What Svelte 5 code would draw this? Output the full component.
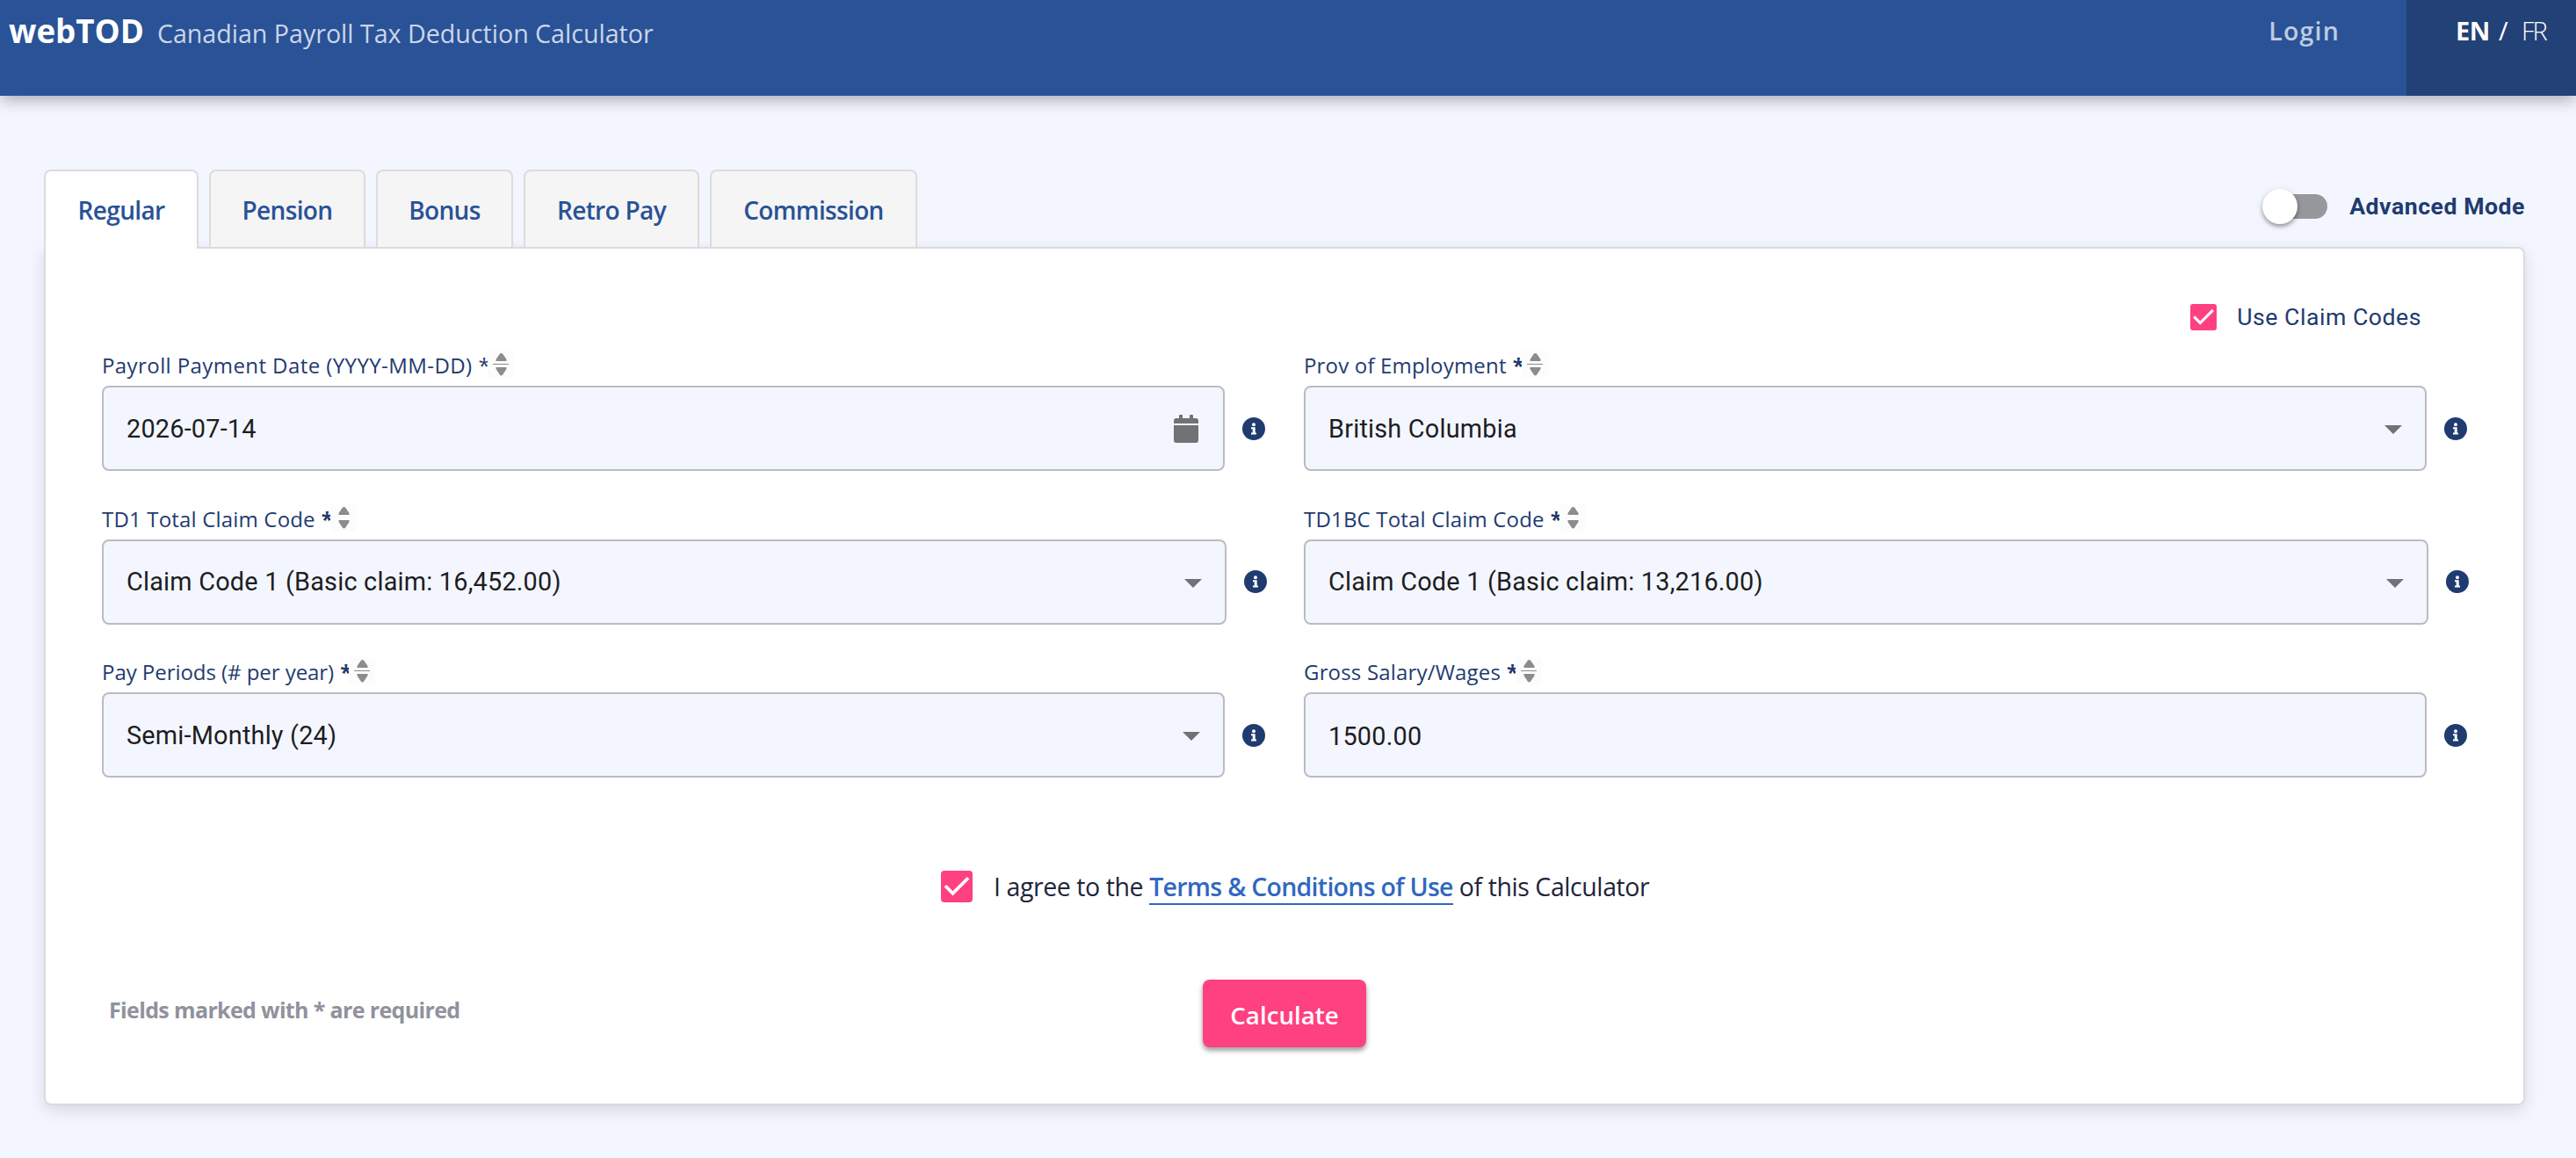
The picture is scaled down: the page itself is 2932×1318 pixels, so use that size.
<script>
  const tabs = ['Regular', 'Pension', 'Bonus', 'Retro Pay', 'Commission'];
  let activeTab = $state('Regular');
  let advanced = $state(false);
  let useClaimCodes = $state(true);
  let agreed = $state(true);

  const fields = [
    { id: 'date', label: 'Payroll Payment Date (YYYY-MM-DD)', value: '2026-07-14', icon: 'calendar', light: true, line: true },
    { id: 'prov', label: 'Prov of Employment', value: 'British Columbia', icon: 'arrow', line: true },
    { id: 'td1', label: 'TD1 Total Claim Code', value: 'Claim Code 1 (Basic claim: 16,452.00)', icon: 'arrow', wide: true },
    { id: 'td1bc', label: 'TD1BC Total Claim Code', value: 'Claim Code 1 (Basic claim: 13,216.00)', icon: 'arrow', wide: true },
    { id: 'periods', label: 'Pay Periods (# per year)', value: 'Semi-Monthly (24)', icon: 'arrow', line: true },
    { id: 'gross', label: 'Gross Salary/Wages', value: '1500.00', line: true }
  ];
</script>

{#snippet tick()}
  <svg viewBox="0 0 24 24"><path d="M3.300 11.500 9 17.200 20.700 5.500" fill="none" stroke="#fff" stroke-width="2.500" /></svg>
{/snippet}

<div class="page">
  <header>
    <div class="brand">
      <strong>webTOD</strong>
      <span>Canadian Payroll Tax Deduction Calculator</span>
    </div>
    <a class="login" href="#login">Login</a>
    <div class="lang"><b>EN</b><span class="slash">/</span><span class="fr">FR</span></div>
  </header>

  <main>
    <div class="top">
      <nav>
        {#each tabs as tab}
          <button class="tab {tab.split(' ')[0].toLowerCase()}" class:active={tab === activeTab} onclick={() => (activeTab = tab)}>
            <span>{tab}</span>
          </button>
        {/each}
      </nav>
      <button class="advanced" class:on={advanced} onclick={() => (advanced = !advanced)}>
        <span class="track"><span class="knob"></span></span>
        <span>Advanced Mode</span>
      </button>
    </div>

    <section class="panel">
      <button class="claim" onclick={() => (useClaimCodes = !useClaimCodes)}>
        <span class="box" class:checked={useClaimCodes}>{#if useClaimCodes}{@render tick()}{/if}</span>
        <span>Use Claim Codes</span>
      </button>

      <div class="fields">
        {#each fields as field (field.id)}
          <div class="field">
            <div class="label">
              <span class="name {field.id}">{field.label}</span>
              <span class="star" class:light={field.light}>*</span>
              <svg class="sort" viewBox="0 0 30 31">
                <rect width="30" height="31" fill="#fcfcfc" />
                {#if field.line}
                  <path d="M14 3.500Q15.500 2.500 17 3.500L21.500 10V12H9.500V10zM9.500 19H21.500V21L17 27.800Q15.500 29 14 27.800L9.500 21z" fill="#8c8c8c" />
                  <path d="M6 15.500h18" stroke="#8c8c8c" />
                {:else}
                  <path d="M14 3.500Q15.500 2.500 17 3.500L21.500 10V12H9.500V10zM9.500 18H21.500V20L17 26.800Q15.500 28 14 26.800L9.500 20z" fill="#8c8c8c" />
                {/if}
              </svg>
            </div>
            <div class="row">
              <div class="input {field.id}" class:wide={field.wide}>
                <span>{field.value}</span>
                {#if field.icon === 'calendar'}
                  <svg class="calendar" viewBox="0 0 28 32">
                    <path d="M0 10V7a3 3 0 0 1 3-3h3V1a1 1 0 0 1 1-1h2a1 1 0 0 1 1 1v3h8V1a1 1 0 0 1 1-1h2a1 1 0 0 1 1 1v3h3a3 3 0 0 1 3 3v3zM0 12h28v17a3 3 0 0 1-3 3H3a3 3 0 0 1-3-3z" />
                  </svg>
                {:else if field.icon === 'arrow'}
                  <svg class="arrow" viewBox="0 0 20 10"><path d="M0 0h20L10 10z" /></svg>
                {/if}
              </div>
              <svg class="info" viewBox="0 0 26 26">
                <circle cx="13" cy="13" r="13" />
                <circle class="mark" cx="13" cy="8.200" r="2" />
                <path class="mark" d="M10 11.200h4.700v6.300H16v2h-6v-2h1.700v-4.300H10z" />
              </svg>
            </div>
          </div>
        {/each}
      </div>

      <div class="agree">
        <button class="box large" class:checked={agreed} aria-label="Agree" onclick={() => (agreed = !agreed)}>{#if agreed}{@render tick()}{/if}</button>
        <p>I agree to the <a href="#terms">Terms &amp; Conditions of Use</a> of this Calculator</p>
      </div>

      <div class="bottom">
        <span class="note">Fields marked with * are required</span>
        <button class="calculate">Calculate</button>
      </div>
    </section>
  </main>
</div>

<style>
  :global(body) {
    background: #f3f6fe;
  }

  .page {
    height: 1318px;
    overflow: hidden;
    font-family: 'Open Sans', 'Noto Sans', sans-serif;
    color: #1f3b70;
  }

  button {
    padding: 0;
    border: none;
    background: none;
    color: inherit;
    font: inherit;
    cursor: pointer;
  }

  svg {
    display: block;
    flex: none;
  }

  header {
    display: flex;
    box-sizing: border-box;
    height: 109px;
    background: #295297;
    box-shadow: 0 4px 18px rgba(0, 0, 0, 0.32);
    color: #fff;
    white-space: nowrap;
  }

  .brand {
    display: flex;
    align-items: baseline;
    flex: 1;
    gap: 15px;
    padding-left: 10px;
    line-height: 70px;
  }

  .brand strong {
    font-size: 36.700px;
    font-weight: 700;
  }

  .brand span {
    font-size: 28.600px;
    color: #cbd6e8;
  }

  .login {
    margin-right: 76px;
    font-size: 28.500px;
    font-weight: 600;
    line-height: 71px;
    letter-spacing: 1.200px;
    color: #bfcbe0;
    text-decoration: none;
  }

  .lang {
    display: flex;
    box-sizing: border-box;
    width: 193px;
    padding-left: 56px;
    background: #224177;
    font-size: 29px;
    line-height: 70px;
  }

  .lang b {
    width: 49px;
    letter-spacing: -0.500px;
  }

  .slash {
    width: 26px;
  }

  .fr {
    font-weight: 300;
    letter-spacing: -2px;
  }

  main {
    padding: 84px 58px 0 50px;
  }

  .top {
    display: flex;
    justify-content: space-between;
    height: 88px;
  }

  nav {
    display: flex;
    gap: 12px;
  }

  .tab {
    z-index: 1;
    box-sizing: border-box;
    height: 88px;
    padding-top: 2px;
    border: 2px solid #dcdcdc;
    border-bottom: none;
    border-radius: 8px 8px 0 0;
    background: #f5f5f5;
    font-size: 28px;
    font-weight: 600;
    letter-spacing: -0.650px;
    color: #295297;
  }

  .tab.regular { width: 176px; }
  .tab.pension { width: 178px; }
  .tab.bonus { width: 156px; }
  .tab.retro { width: 200px; }
  .tab.commission { width: 236px; }

  .tab.active {
    height: 90px;
    padding-bottom: 2px;
    background: #fff;
  }

  .advanced {
    display: flex;
    align-items: center;
    align-self: flex-start;
    gap: 25px;
    height: 84px;
    font: 700 26.700px Roboto, sans-serif;
    letter-spacing: 0.500px;
  }

  .track {
    display: flex;
    align-items: center;
    width: 72px;
    height: 28px;
    border-radius: 14px;
    background: #97989c;
  }

  .knob {
    flex: none;
    width: 40px;
    height: 40px;
    margin-left: -2px;
    border-radius: 50%;
    background: #fff;
    box-shadow: 0 3px 4px rgba(0, 0, 0, 0.3), 0 2px 8px rgba(0, 0, 0, 0.12);
  }

  .advanced.on .track {
    justify-content: flex-end;
    background: #ff9fbf;
  }

  .panel {
    box-sizing: border-box;
    height: 977px;
    padding: 63px 0 0 64px;
    border: 2px solid #d9dbde;
    border-radius: 0 8px 8px 8px;
    background: #fff;
    box-shadow: 0 6px 18px rgba(0, 0, 0, 0.12);
  }

  .claim {
    display: flex;
    align-items: center;
    gap: 23px;
    height: 30px;
    margin: 0 116px 23px auto;
    font: 400 26.700px Roboto, sans-serif;
    letter-spacing: 0.500px;
  }

  .box {
    flex: none;
    box-sizing: border-box;
    width: 30px;
    height: 30px;
    border: 3px solid #757575;
    border-radius: 3px;
  }

  .box.checked {
    border: none;
    background: #ff4081;
  }

  .box.large {
    width: 36px;
    height: 36px;
    border-radius: 4px;
  }

  .fields {
    display: grid;
    grid-template-columns: 1368px 1368px;
    row-gap: 37.500px;
  }

  .label {
    display: flex;
    height: 31px;
    margin-bottom: 9px;
    font-size: 24px;
    line-height: 33px;
    letter-spacing: 0.180px;
    white-space: nowrap;
  }

  .name.date {
    letter-spacing: 0.420px;
  }

  .name.periods {
    letter-spacing: -0.050px;
  }

  .star {
    width: 10px;
    margin-left: 7px;
    font-weight: 700;
  }

  .star.light {
    font-weight: 400;
  }

  .sort {
    width: 30px;
    height: 31px;
  }

  .row {
    display: flex;
    align-items: center;
    gap: 20px;
    height: 97px;
  }

  .input {
    display: flex;
    align-items: center;
    justify-content: space-between;
    box-sizing: border-box;
    width: 1278px;
    height: 97px;
    padding: 0 28px 0 26px;
    border: 2px solid #bbbcc2;
    border-radius: 8px;
    background: #f3f6fe;
    font: 400 28.800px Roboto, sans-serif;
    letter-spacing: 0.230px;
    color: #1d1d1f;
  }

  .input.wide {
    width: 1280px;
  }

  .input.gross {
    padding-top: 2px;
  }

  .calendar {
    width: 28px;
    height: 32px;
    fill: #717275;
  }

  .arrow {
    width: 20px;
    height: 10px;
    margin: 3px -2px 0 0;
    fill: #717275;
  }

  .info {
    width: 26px;
    height: 26px;
    fill: #1f3b70;
  }

  .info .mark {
    fill: #fff;
  }

  .agree {
    display: flex;
    align-items: center;
    gap: 24px;
    height: 36px;
    margin: 106px 0 0 955px;
    font-size: 28.500px;
    letter-spacing: -0.420px;
    color: #21253a;
  }

  p {
    margin: 0;
    white-space: nowrap;
  }

  .agree a {
    border-bottom: 2px solid #3068c0;
    font-weight: 600;
    letter-spacing: -0.720px;
    color: #3068c0;
    text-decoration: none;
  }

  .bottom {
    display: grid;
    grid-template-columns: 1253px 186px;
    margin-top: 88px;
  }

  .note {
    padding-left: 8px;
    font-size: 25px;
    font-weight: 700;
    line-height: 69px;
    letter-spacing: -0.640px;
    color: #90929c;
  }

  .calculate {
    height: 77px;
    padding-top: 2px;
    border-radius: 8px;
    background: #ff4081;
    box-shadow: 0 4px 5px rgba(0, 0, 0, 0.3), 0 2px 8px rgba(0, 0, 0, 0.12);
    font-size: 27.700px;
    font-weight: 600;
    color: #fff;
  }
</style>
